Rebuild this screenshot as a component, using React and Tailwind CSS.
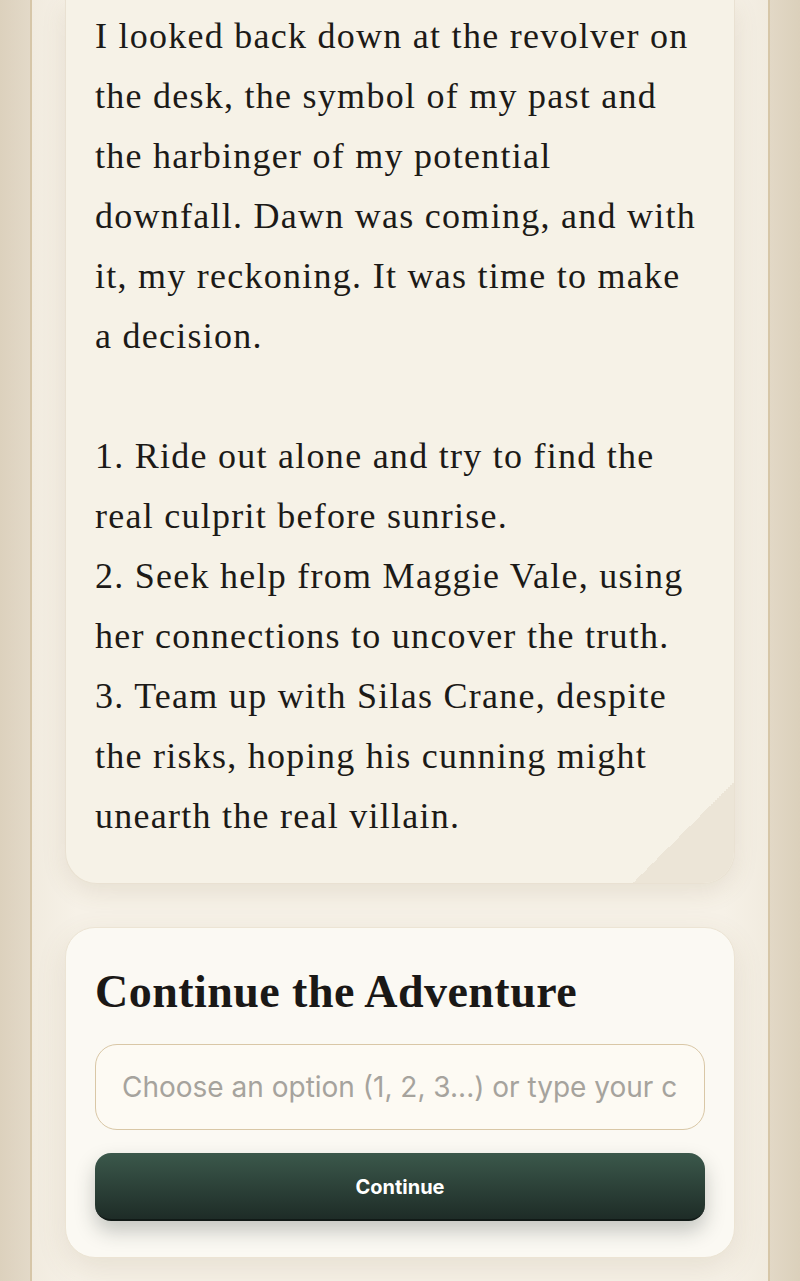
import { useState } from 'react';

const storyLines = [
    "I looked back down at the revolver on",
    "the desk, the symbol of my past and",
    "the harbinger of my potential",
    "downfall. Dawn was coming, and with",
    "it, my reckoning. It was time to make",
    "a decision.",
    "",
    "1. Ride out alone and try to find the",
    "real culprit before sunrise.",
    "2. Seek help from Maggie Vale, using",
    "her connections to uncover the truth.",
    "3. Team up with Silas Crane, despite",
    "the risks, hoping his cunning might",
    "unearth the real villain.",
];

export default function App() {
    const [choice, setChoice] = useState("");

    return (
        <div className="min-h-screen flex bg-[linear-gradient(90deg,#d9cdb8,#e4dac9)]">
            {/* left strip */}
            <div className="w-[30px] shrink-0 bg-[linear-gradient(90deg,#dcd1bd,#e3d9c8)]" />

            {/* main page */}
            <div className="w-[740px] shrink-0 border-l-2 border-r-2 border-[#d6c6a8] bg-[linear-gradient(90deg,#f1ebdf,#f6f1e7_6%,#f6f1e7_94%,#f1ebdf)] px-[33px] pb-[23px] flex flex-col gap-[43px]">

                {/* Story card */}
                <div className="relative overflow-hidden rounded-b-[32px] bg-[#f6f2e7] border-x border-b border-[#e9e1d2] shadow-[0_8px_24px_rgba(120,100,60,0.12)] px-[29px] pt-[6px] pb-[37px]">
                    <div className="text-[36px] leading-[60px] tracking-[0.035em] text-[#1c1a17]" style={{ fontFamily: '"Liberation Serif", "DejaVu Serif", serif' }}>
                        {storyLines.map((line, i) => (
                            <div key={i} className="h-[60px] whitespace-nowrap">{line || "\u00a0"}</div>
                        ))}
                    </div>
                    {/* folded corner */}
                    <div className="absolute right-0 bottom-0 w-[102px] h-[100px] bg-[linear-gradient(135deg,transparent_50%,#ece5d7_50%)]" />
                </div>

                {/* Continue card */}
                <div className="rounded-[30px] bg-[#fbf9f3] border border-[#ece4d4] shadow-[0_10px_30px_rgba(120,100,60,0.12)] px-[29px] pt-[36px] pb-[36px]">
                    <h2 className="text-[46px] leading-[56px] font-bold tracking-[0.01em] text-[#1a1816]" style={{ fontFamily: '"Liberation Serif", serif' }}>
                        Continue the Adventure
                    </h2>

                    <input
                        type="text"
                        value={choice}
                        onChange={(e) => setChoice(e.target.value)}
                        placeholder="Choose an option (1, 2, 3...) or type your custom action"
                        className="mt-[24px] w-full h-[86px] rounded-[22px] border-[1.5px] border-[#d9c7a6] bg-[#fdfaf3] px-[26px] text-[28px] text-[#2a2a2a] placeholder:text-[#a6a39d] outline-none"
                        style={{ fontFamily: 'Inter, "Noto Sans", sans-serif' }}
                    />

                    <button
                        className="mt-[23px] w-full h-[68px] rounded-[16px] bg-[linear-gradient(180deg,#3b584b,#1e2c27)] border-b-2 border-[#111a17] pt-[2px] text-white text-[20px] font-bold shadow-[0_10px_20px_rgba(30,44,39,0.25)]"
                        style={{ fontFamily: 'Inter, "Noto Sans", sans-serif' }}
                    >
                        Continue
                    </button>
                </div>
            </div>

            {/* right strip */}
            <div className="w-[30px] shrink-0 bg-[linear-gradient(90deg,#e2d8c6,#dbd0bb)]" />
        </div>
    );
}
